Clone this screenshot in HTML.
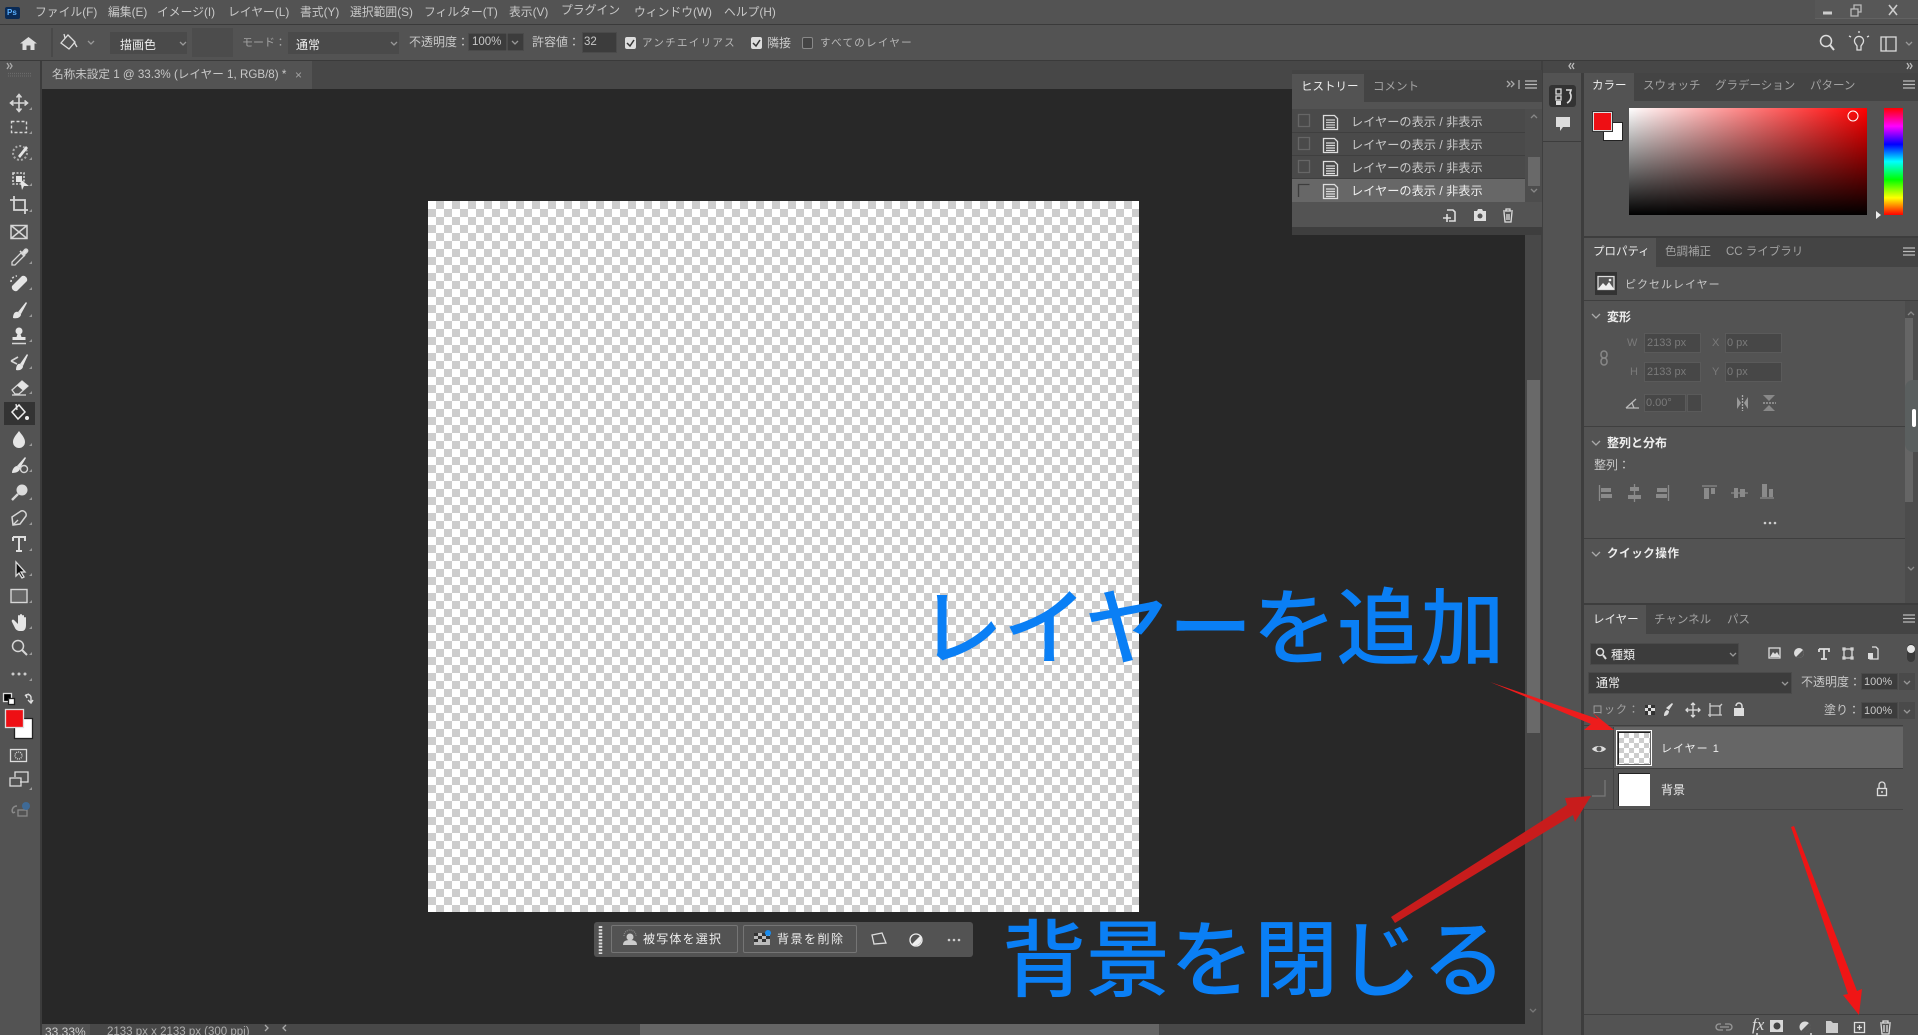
<!DOCTYPE html>
<html lang="ja"><head><meta charset="utf-8"><title>Photoshop</title>
<style>
html,body{margin:0;padding:0;background:#535353;width:1918px;height:1035px;overflow:hidden}
body{position:relative;font-family:"Liberation Sans","Noto Sans CJK JP",sans-serif}
.b{position:absolute}
.t{position:absolute;white-space:nowrap;line-height:16px;font-size:12px;color:#c8c8c8}
.d{color:#a2a2a2}.w{color:#eee}.m{color:#7a7a7a}.bold{font-weight:700;color:#eee}
.f{position:absolute;background:#3c3c3c;border:1px solid #4a4a4a;box-sizing:border-box}
.dis{position:absolute;background:#474747;border:1px solid #5a5a5a;box-sizing:border-box}
.ann{position:absolute;white-space:nowrap;color:#0a7ff5;font-size:84px;line-height:90px;font-family:"Noto Sans CJK JP",sans-serif;font-weight:500}
</style></head><body>
<!-- chrome -->
<div class="b" style="left:0;top:24px;width:1918px;height:1px;background:#3a3a3a"></div>
<div class="b" style="left:0;top:60px;width:1918px;height:1px;background:#3a3a3a"></div>
<div class="b" style="left:1815px;top:0;width:103px;height:18px;background:#575757;border-bottom:1px solid #626262"></div>
<!-- tab bar -->
<div class="b" style="left:0;top:61px;width:1541px;height:12px;background:#474747"></div>
<div class="b" style="left:42px;top:61px;width:1499px;height:28px;background:#474747"></div>
<div class="b" style="left:42px;top:61px;width:270px;height:28px;background:#535353"></div>
<!-- workspace -->
<div class="b" style="left:42px;top:89px;width:1483px;height:935px;background:#282828"></div>
<div class="b" style="left:0;top:61px;width:40px;height:974px;background:#535353"></div>
<div class="b" style="left:40px;top:61px;width:2px;height:974px;background:#3c3c3c"></div>
<div class="b" style="left:4px;top:402px;width:31px;height:23px;background:#333"></div>
<!-- canvas -->
<div class="b" style="left:428px;top:201px;width:711px;height:711px;background:conic-gradient(#cdcdcd 25%,#fff 0 50%,#cdcdcd 0 75%,#fff 0) 0 0/16px 16px"></div>
<!-- scrollbars -->
<div class="b" style="left:1525px;top:89px;width:16px;height:946px;background:#484848"></div>
<div class="b" style="left:1527px;top:380px;width:13px;height:353px;background:#696969"></div>
<div class="b" style="left:42px;top:1024px;width:1499px;height:11px;background:#484848"></div>
<div class="b" style="left:42px;top:1024px;width:48px;height:11px;background:#535353"></div>
<div class="b" style="left:640px;top:1024px;width:519px;height:11px;background:#656565"></div>
<div class="t" style="left:45px;top:1024px;font-size:12px;color:#ccc">33.33%</div>
<div class="t" style="left:107px;top:1024px;font-size:11.5px;color:#b0b0b0">2133 px x 2133 px (300 ppi)</div>
<!-- contextual bar -->
<div class="b" style="left:594px;top:922px;width:379px;height:35px;background:#535353;border-radius:3px"></div>
<div class="b" style="left:611px;top:925px;width:127px;height:28px;box-sizing:border-box;border:1px solid #757575;border-radius:2px"></div>
<div class="b" style="left:743px;top:925px;width:114px;height:28px;box-sizing:border-box;border:1px solid #757575;border-radius:2px"></div>
<div class="t w" style="left:643px;top:931px;letter-spacing:1.2px">被写体を選択</div>
<div class="t w" style="left:777px;top:931px;letter-spacing:1.5px">背景を削除</div>
<!-- dock -->
<div class="b" style="left:1541px;top:61px;width:2px;height:974px;background:#3f3f3f"></div>
<div class="b" style="left:1543px;top:61px;width:375px;height:12px;background:#474747"></div>
<div class="b" style="left:1581px;top:73px;width:3px;height:962px;background:#3d3d3d"></div>
<div class="b" style="left:1543px;top:141px;width:38px;height:1px;background:#3d3d3d"></div>
<div class="b" style="left:1549px;top:85px;width:27px;height:22px;background:#333;border-radius:3px"></div>
<!-- colour panel -->
<div class="b" style="left:1584px;top:73px;width:334px;height:28px;background:#444"></div>
<div class="b" style="left:1584px;top:73px;width:50px;height:29px;background:#535353"></div>
<div class="t w" style="left:1592px;top:78px;font-size:11.5px">カラー</div>
<div class="t d" style="left:1643px;top:78px;font-size:11.5px">スウォッチ</div>
<div class="t d" style="left:1715px;top:78px;font-size:11.5px">グラデーション</div>
<div class="t d" style="left:1810px;top:78px;font-size:11.5px">パターン</div>
<div class="b" style="left:1603px;top:122px;width:20px;height:19px;background:#fff;border:1px solid #222;box-sizing:border-box"></div>
<div class="b" style="left:1593px;top:112px;width:19px;height:19px;background:#ee0f14;border:1px solid #ddd;box-sizing:border-box;outline:1px solid #333"></div>
<div class="b" style="left:1629px;top:108px;width:238px;height:107px;background:linear-gradient(to bottom,rgba(0,0,0,0),#000),linear-gradient(to right,#fff,#f00)"></div>
<div class="b" style="left:1884px;top:108px;width:19px;height:107px;background:linear-gradient(to bottom,#f00,#f0f 17%,#00f 34%,#0ff 50%,#0f0 67%,#ff0 84%,#f00)"></div>
<div class="b" style="left:1584px;top:236px;width:334px;height:2px;background:#3d3d3d"></div>
<!-- properties -->
<div class="b" style="left:1584px;top:238px;width:334px;height:29px;background:#444"></div>
<div class="b" style="left:1584px;top:238px;width:72px;height:30px;background:#535353"></div>
<div class="t w" style="left:1593px;top:244px;font-size:11.5px">プロパティ</div>
<div class="t d" style="left:1665px;top:244px;font-size:11.5px">色調補正</div>
<div class="t d" style="left:1726px;top:244px;font-size:11.5px">CC ライブラリ</div>
<div class="b" style="left:1595px;top:272px;width:22px;height:23px;background:#333"></div>
<div class="t" style="left:1625px;top:277px;font-size:11px;letter-spacing:1px">ピクセルレイヤー</div>
<div class="b" style="left:1584px;top:300px;width:334px;height:1px;background:#3f3f3f"></div>
<div class="t bold" style="left:1607px;top:309px">変形</div>
<div class="t m" style="left:1627px;top:335px;font-size:11px">W</div>
<div class="t m" style="left:1630px;top:364px;font-size:11px">H</div>
<div class="t m" style="left:1712px;top:335px;font-size:11px">X</div>
<div class="t m" style="left:1712px;top:364px;font-size:11px">Y</div>
<div class="dis" style="left:1644px;top:333px;width:57px;height:20px"></div>
<div class="dis" style="left:1725px;top:333px;width:57px;height:20px"></div>
<div class="dis" style="left:1644px;top:362px;width:57px;height:20px"></div>
<div class="dis" style="left:1725px;top:362px;width:57px;height:20px"></div>
<div class="dis" style="left:1644px;top:394px;width:42px;height:18px"></div>
<div class="dis" style="left:1687px;top:394px;width:15px;height:18px"></div>
<div class="t m" style="left:1647px;top:335px;font-size:11px">2133 px</div>
<div class="t m" style="left:1727px;top:335px;font-size:11px">0 px</div>
<div class="t m" style="left:1647px;top:364px;font-size:11px">2133 px</div>
<div class="t m" style="left:1727px;top:364px;font-size:11px">0 px</div>
<div class="t m" style="left:1646px;top:395px;font-size:11px">0.00°</div>
<div class="b" style="left:1584px;top:426px;width:321px;height:1px;background:#3f3f3f"></div>
<div class="t bold" style="left:1607px;top:435px">整列と分布</div>
<div class="t" style="left:1594px;top:457px">整列：</div>
<div class="b" style="left:1584px;top:538px;width:321px;height:1px;background:#3f3f3f"></div>
<div class="t bold" style="left:1607px;top:546px;font-size:11.5px;letter-spacing:.6px">クイック操作</div>
<div class="b" style="left:1905px;top:301px;width:13px;height:302px;background:#4c4c4c"></div>
<div class="b" style="left:1905px;top:318px;width:8px;height:184px;background:#656565"></div>
<div class="b" style="left:1905px;top:380px;width:13px;height:72px;background:#5a5f5f;border-radius:8px 0 0 8px"></div>
<div class="b" style="left:1912px;top:409px;width:4px;height:18px;background:#fff;border-radius:2px"></div>
<!-- layers -->
<div class="b" style="left:1584px;top:603px;width:334px;height:2px;background:#3d3d3d"></div>
<div class="b" style="left:1584px;top:605px;width:334px;height:29px;background:#444"></div>
<div class="b" style="left:1584px;top:605px;width:62px;height:30px;background:#535353"></div>
<div class="t w" style="left:1593px;top:612px;font-size:11.5px">レイヤー</div>
<div class="t d" style="left:1654px;top:612px;font-size:11.5px">チャンネル</div>
<div class="t d" style="left:1727px;top:612px;font-size:11.5px">パス</div>
<div class="f" style="left:1590px;top:643px;width:149px;height:22px"></div>
<div class="t w" style="left:1611px;top:647px">種類</div>
<div class="f" style="left:1588px;top:672px;width:204px;height:22px"></div>
<div class="t w" style="left:1596px;top:675px">通常</div>
<div class="t" style="left:1801px;top:674px;font-size:12px">不透明度：</div>
<div class="f" style="left:1861px;top:673px;width:37px;height:17px"></div>
<div class="b" style="left:1899px;top:673px;width:16px;height:17px;background:#4a4a4a"></div>
<div class="t" style="left:1864px;top:674px;font-size:11px">100%</div>
<div class="t d" style="left:1592px;top:702px;font-size:11px;letter-spacing:1px">ロック：</div>
<div class="t" style="left:1824px;top:702px;font-size:12px">塗り：</div>
<div class="f" style="left:1861px;top:702px;width:37px;height:17px"></div>
<div class="b" style="left:1899px;top:702px;width:16px;height:17px;background:#4a4a4a"></div>
<div class="t" style="left:1864px;top:703px;font-size:11px">100%</div>
<div class="b" style="left:1584px;top:725px;width:319px;height:1px;background:#3f3f3f"></div>
<div class="b" style="left:1584px;top:727px;width:319px;height:41px;background:#535353"></div>
<div class="b" style="left:1614px;top:727px;width:289px;height:41px;background:#666"></div>
<div class="b" style="left:1584px;top:768px;width:319px;height:1px;background:#3f3f3f"></div>
<div class="b" style="left:1584px;top:809px;width:319px;height:1px;background:#444"></div>
<div class="b" style="left:1613px;top:727px;width:1px;height:82px;background:#444"></div>
<div class="b" style="left:1616px;top:730px;width:36px;height:36px;box-sizing:border-box;border:1px solid #fff;padding:1px"><div style="width:100%;height:100%;border-top:1px solid #222;border-left:1px solid #222;box-sizing:border-box;background:conic-gradient(#cdcdcd 25%,#fff 0 50%,#cdcdcd 0 75%,#fff 0) 0 0/10px 10px"></div></div>
<div class="b" style="left:1618px;top:773px;width:32px;height:33px;background:#fff;border-top:1px solid #222;border-left:1px solid #222;box-sizing:border-box"></div>
<div class="t" style="left:1661px;top:741px;font-size:11px;letter-spacing:1px;color:#eee">レイヤー 1</div>
<div class="t w" style="left:1661px;top:782px">背景</div>
<div class="b" style="left:1584px;top:1014px;width:334px;height:1px;background:#3f3f3f"></div>
<!-- history panel -->
<div class="b" style="left:1292px;top:70px;width:250px;height:165px;background:#535353"></div>
<div class="b" style="left:1292px;top:70px;width:250px;height:32px;background:#444"></div>
<div class="b" style="left:1292px;top:74px;width:72px;height:29px;background:#535353"></div>
<div class="t w" style="left:1301px;top:79px;font-size:11.5px">ヒストリー</div>
<div class="t d" style="left:1373px;top:79px;font-size:11.5px">コメント</div>
<div class="b" style="left:1292px;top:109px;width:233px;height:93px;background:#4a4a4a"></div>
<div class="b" style="left:1292px;top:132px;width:233px;height:1px;background:#3f3f3f"></div>
<div class="b" style="left:1292px;top:155px;width:233px;height:1px;background:#3f3f3f"></div>
<div class="b" style="left:1292px;top:178px;width:233px;height:1px;background:#3f3f3f"></div>
<div class="b" style="left:1292px;top:179px;width:233px;height:23px;background:#676767"></div>
<div class="b" style="left:1525px;top:109px;width:17px;height:93px;background:#4d4d4d"></div>
<div class="b" style="left:1528px;top:157px;width:12px;height:29px;background:#696969"></div>
<div class="t" style="left:1351px;top:114px;font-size:12.2px">レイヤーの表示 / 非表示</div>
<div class="t" style="left:1351px;top:137px;font-size:12.2px">レイヤーの表示 / 非表示</div>
<div class="t" style="left:1351px;top:160px;font-size:12.2px">レイヤーの表示 / 非表示</div>
<div class="t w" style="left:1351px;top:183px;font-size:12.2px">レイヤーの表示 / 非表示</div>
<div class="b" style="left:1292px;top:227px;width:250px;height:8px;background:#3e3e3e"></div>
<!-- menu -->
<div class="t" style="left:35px;top:4px;font-size:11.8px">ファイル(F)</div>
<div class="t" style="left:108px;top:4px;font-size:11.8px">編集(E)</div>
<div class="t" style="left:157px;top:4px;font-size:11.8px">イメージ(I)</div>
<div class="t" style="left:228px;top:4px;font-size:11.8px">レイヤー(L)</div>
<div class="t" style="left:300px;top:4px;font-size:11.8px">書式(Y)</div>
<div class="t" style="left:350px;top:4px;font-size:11.8px">選択範囲(S)</div>
<div class="t" style="left:424px;top:4px;font-size:11.8px">フィルター(T)</div>
<div class="t" style="left:509px;top:4px;font-size:11.8px">表示(V)</div>
<div class="t" style="left:561px;top:2px;font-size:11.8px">プラグイン</div>
<div class="t" style="left:634px;top:4px;font-size:11.8px">ウィンドウ(W)</div>
<div class="t" style="left:724px;top:4px;font-size:11.8px">ヘルプ(H)</div>
<div class="b" style="left:5px;top:7px;width:15px;height:12px;background:#0a2a55;border-radius:2px"></div>
<div class="t" style="left:7px;top:5px;font-size:8px;color:#5ab0ff;font-weight:700">Ps</div>
<!-- options -->
<div class="f" style="left:110px;top:32px;width:77px;height:22px;background:#4a4a4a"></div>
<div class="b" style="left:192px;top:28px;width:41px;height:29px;background:#4c4c4c"></div>
<div class="f" style="left:288px;top:32px;width:111px;height:22px;background:#4a4a4a"></div>
<div class="f" style="left:468px;top:33px;width:56px;height:18px"></div>
<div class="f" style="left:582px;top:32px;width:35px;height:21px"></div>
<div class="t w" style="left:120px;top:37px">描画色</div>
<div class="t d" style="left:242px;top:35px;font-size:11px">モード：</div>
<div class="t w" style="left:296px;top:37px">通常</div>
<div class="t" style="left:409px;top:34px">不透明度：</div>
<div class="t" style="left:472px;top:34px;font-size:11.5px">100%</div>
<div class="t" style="left:532px;top:34px">許容値：</div>
<div class="t" style="left:584px;top:34px;font-size:11.5px">32</div>
<div class="b" style="left:625px;top:37px;width:11px;height:12px;background:#ddd;border-radius:2px"></div>
<div class="t" style="left:642px;top:35px;font-size:10.5px;letter-spacing:1.3px;color:#b8b8b8">アンチエイリアス</div>
<div class="b" style="left:751px;top:37px;width:11px;height:12px;background:#ddd;border-radius:2px"></div>
<div class="t" style="left:767px;top:35px">隣接</div>
<div class="b" style="left:802px;top:37px;width:11px;height:12px;border:1px solid #888;box-sizing:border-box;border-radius:2px;background:#444"></div>
<div class="t" style="left:820px;top:35px;font-size:10.5px;letter-spacing:1.3px;color:#b8b8b8">すべてのレイヤー</div>
<div class="t" style="left:52px;top:67px;font-size:11.6px">名称未設定 1 @ 33.3% (レイヤー 1, RGB/8) *</div>
<div class="t d" style="left:295px;top:67px">×</div>

<svg class="b" style="left:0;top:0" width="1918" height="1035" viewBox="0 0 1918 1035" fill="none" stroke="#cfcfcf" stroke-width="1.3">
<!-- option bar icons -->
<path d="M20 43.5L28.5 37L37 43.5H34.5V50H30.5V45.5H26.5V50H22.5V43.5Z" fill="#ddd" stroke="none"/>
<path d="M52 28V57" stroke="#444"/>
<path d="M61 43l7-8 7 7-6 7zM65 38l-1-4" stroke="#ddd"/><path d="M74 42l3 5" stroke="#ddd"/>
<path d="M88 41l3 3 3-3M180 42l3 3 3-3M391 42l3 3 3-3M512 41l3 3 3-3M1906 42l3 3 3-3" stroke="#999"/>
<path d="M507 33V51" stroke="#555"/>
<path d="M627 43l3 3 4-6M753 43l3 3 4-6" stroke="#333" stroke-width="1.5"/>
<!-- window controls -->
<path d="M1823 13h9" stroke="#ccc" stroke-width="3"/>
<path d="M1851 9h7v7h-7zM1854 9V5h7v7h-3" stroke="#bbb"/>
<path d="M1889 5l8 10M1897 5l-8 10" stroke="#ccc" stroke-width="1.6"/>
<!-- top right -->
<circle cx="1826" cy="41" r="5.5" stroke="#ddd" stroke-width="1.5"/><path d="M1830 45l4 5" stroke="#ddd" stroke-width="2"/>
<path d="M1855 43a4.5 4.5 0 1 1 8 0l-2 3v4h-4v-4z" stroke="#ddd"/><path d="M1851 37l-2-1M1867 37l2-1M1859 33v-2" stroke="#ddd"/>
<path d="M1881 37h15v14h-15zM1886 37v14" stroke="#ddd"/>
<!-- collapse chevrons -->
<path d="M7 63l2 3-2 3M10 63l2 3-2 3" stroke="#aaa"/>
<path d="M1574 63l-2 3 2 3M1571 63l-2 3 2 3" stroke="#bbb"/>
<path d="M1907 63l2 3-2 3M1910 63l2 3-2 3" stroke="#bbb"/>
<path d="M8 73.5h24M8 76h24" stroke="#6a6a6a" stroke-dasharray="1 1"/>
<!-- tools -->
<g stroke="#d6d6d6" stroke-width="1.3">
<g transform="translate(19,103)"><path d="M0-8V8M-8 0H8M-2.5-5.5L0-8.5L2.5-5.5M-2.5 5.5L0 8.5L2.5 5.5M-5.5-2.5L-8.5 0L-5.5 2.5M5.5-2.5L8.5 0L5.5 2.5" stroke-width="1.6"/></g>
<g transform="translate(19,127)"><rect x="-7.5" y="-5.5" width="15" height="11" stroke-dasharray="3 2" stroke-width="1.4"/></g>
<g transform="translate(20,153)"><circle cx="0" cy="0" r="7" stroke-dasharray="2 2" stroke-width="2" stroke="#aaa"/><path d="M-2 3L6-7L8-5L0 5Z" fill="#e5e5e5" stroke="none"/></g>
<g transform="translate(19,179)"><rect x="-6" y="-6" width="11" height="11" stroke-dasharray="2 1.5" stroke-width="1.6"/><path d="M-3-3h6v6h-6zM1 0L10 7L5 7L3 11Z" fill="#e5e5e5" stroke="none"/></g>
<g transform="translate(19,205)"><path d="M-9-5H6V9M-5-9V5H9" stroke-width="1.8"/></g>
<g transform="translate(19,232)"><path d="M-8-6.5H8V6.5H-8ZM-8-6.5L8 6.5M8-6.5L-8 6.5" stroke-width="1.5"/></g>
<g transform="translate(19,257)"><path d="M-7 8L-7 5L2-4L5-1L-4 8Z" /><path d="M1-6L6-1M3-4L6-7.5A1.5 1.5 0 0 1 8-5L5-2Z" fill="#e5e5e5" stroke-width="1.6"/></g>
<g transform="translate(19,283)"><path d="M-7 3L3-7A4 4 0 0 1 8-2L-2 8A4 4 0 0 1-7 3Z" fill="#e5e5e5" stroke="none"/><path d="M-8-1a6 6 0 0 1 6-6" stroke-dasharray="2 2" stroke-width="1.6"/></g>
<g transform="translate(19,310)"><path d="M-1 2L7-8L8-7L2 4Z" fill="#e5e5e5" stroke="none"/><path d="M-6 8C-6 4-4 1-1 2L2 4C2 7-1 9-6 8Z" fill="#e5e5e5" stroke="none"/></g>
<g transform="translate(19,336)"><circle cx="0" cy="-5" r="3.5" fill="#e5e5e5" stroke="none"/><path d="M-1.5-2h3l1 3h4v3h-13v-3h4z" fill="#e5e5e5" stroke="none"/><path d="M-7 7.5H7" stroke-width="1.5"/></g>
<g transform="translate(20,362)"><path d="M0 2L7-8L8-7L3 4Z" fill="#e5e5e5" stroke="none"/><path d="M-4 8C-4 4-2 1 0 2L3 4C3 7 0 9-4 8Z" fill="#e5e5e5" stroke="none"/><path d="M-9-1L-2-5M-9-1L-3 2" stroke-width="1.6"/></g>
<g transform="translate(20,387)"><path d="M-8 3L2-6L8-1L-1 7H-5Z" /><path d="M-3-1.500L2-6L8-1L3 3.500Z" fill="#e5e5e5" stroke="none"/><path d="M-8 8H6"/></g>
<g transform="translate(19,413)"><path d="M-7-1L0-8L6-1L-1 6Z" stroke="#eee" stroke-width="1.5"/><path d="M-2-3L-3-9" stroke="#eee"/><circle cx="8" cy="5" r="2" fill="#eee" stroke="none"/></g>
<g transform="translate(19,439)"><path d="M0-8C3-4 6-1 6 3A6 6 0 0 1-6 3C-6-1-3-4 0-8Z" fill="#e5e5e5" stroke="none"/></g>
<g transform="translate(19,465)"><path d="M-2 1L6-8L7-7L1 3Z" fill="#e5e5e5" stroke="none"/><path d="M-7 8C-7 4-4 1-2 1L1 3C1 6-2 8-7 8Z" fill="#e5e5e5" stroke="none"/><circle cx="5" cy="4" r="3.500" stroke-width="1.4"/></g>
<g transform="translate(19,493)"><circle cx="3" cy="-3" r="5.500" fill="#dcdcdc" stroke="none"/><path d="M-1 1L-7 7" stroke-width="2.400"/></g>
<g transform="translate(19,518)"><path d="M-6 7L-7-1L2-7A4 4 0 0 1 7-2L1 6Z" stroke-width="1.500"/><path d="M-6 7L-1 2" /></g>
<g transform="translate(19,570)"><path d="M-3-8V6L0 3L3 8L5 7L2 2L6 2Z" fill="#111" stroke="#ddd"/></g>
<g transform="translate(19,596)"><rect x="-8" y="-6.500" width="16" height="13" fill="#666" stroke-width="1.400"/></g>
<g transform="translate(19,622)"><path d="M-7 0L-4 6C-3 8-1 9 1 9H3C6 9 7 6 7 3V-4A1 1 0 0 0 5-4V0V-6A1 1 0 0 0 3-6V-1V-7A1 1 0 0 0 1-7V-1V-6A1 1 0 0 0-1-6V2L-5-2C-6-3-8-2-7 0Z" fill="#e5e5e5" stroke="none"/></g>
<g transform="translate(19,648)"><circle cx="-1" cy="-2" r="5.500" stroke-width="1.500"/><path d="M3 2L8 7" stroke-width="2"/></g>
<g transform="translate(19,674)" fill="#ccc" stroke="none"><circle cx="-6" cy="0" r="1.500"/><circle cx="0" cy="0" r="1.500"/><circle cx="6" cy="0" r="1.500"/></g>
<path d="M25 696c2-2 5-2 6 1v5M28 700l3 3 2-3M29 694l-3 1 1 3" stroke="#ddd" stroke-width="1.400"/>
<rect x="10.500" y="749.500" width="16" height="12" stroke="#ddd"/><circle cx="18.500" cy="755.500" r="3.500" stroke-dasharray="1 1" stroke="#ddd"/>
<path d="M15 777v-5h13v10h-8M10 778h11v8H10z" stroke="#ddd" stroke-width="1.300"/>
<path d="M13 813c-2-3 0-7 4-7M13 813l-1-2M13 813l2-1" stroke="#8a8a8a" stroke-width="1.500"/><rect x="18" y="810" width="9" height="6" stroke="#8a8a8a"/>
</g>
<circle cx="26" cy="806" r="4" fill="#3f6a96" stroke="none"/>
<g fill="#999" stroke="none"><path d="M29 110h3v-3zM29 134h3v-3zM29 160h3v-3zM29 186h3v-3zM29 212h3v-3zM29 264h3v-3zM29 290h3v-3zM29 317h3v-3zM29 342h3v-3zM29 369h3v-3zM29 394h3v-3zM29 446h3v-3zM29 472h3v-3zM29 500h3v-3zM29 525h3v-3zM29 551h3v-3zM29 576h3v-3zM29 603h3v-3zM29 629h3v-3zM29 655h3v-3zM29 681h3v-3zM29 790h3v-3z"/></g>
<!-- small default swatch -->
<rect x="3.500" y="693.500" width="8" height="8" fill="#000" stroke="#ddd"/><rect x="8.500" y="698.500" width="6" height="6" fill="#fff" stroke="#222"/>
<rect x="14.500" y="718.500" width="18" height="20" fill="#fff" stroke="#222"/><rect x="5.500" y="709.500" width="18" height="18" fill="#ee0f14" stroke="#ddd"/>
<!-- T -->
<path d="M13 537H25V541M13 537V541M19 537V551M16 551H22" stroke="#ddd" stroke-width="2"/>
<!-- contextual icons -->
<path d="M598.500 926V954" stroke="#ddd" stroke-width="3.500" stroke-dasharray="2 1.300" transform="translate(2,0)"/>
<circle cx="630" cy="937" r="3.500" fill="#ccc" stroke="none"/><path d="M623 945c0-4 3-5 7-5s7 1 7 5z" fill="#ccc" stroke="none"/><path d="M624 936a6 6 0 0 1 12 0" stroke="#888" stroke-dasharray="1 1"/>
<rect x="754" y="933" width="16" height="12" fill="#bbb" stroke="none"/><path d="M754 933h4v3h-4zM762 933h4v3h-4zM758 936h4v3h-4zM766 936h4v3h-4zM754 939h4v3h-4zM762 939h4v3h-4z" fill="#333" stroke="none"/><circle cx="768" cy="933" r="3" fill="#1b8ef0" stroke="none"/>
<path d="M872 935l10-2 4 10-12 1zM872 935l2 9" stroke="#ddd"/>
<circle cx="916" cy="940" r="6" stroke="#eee" stroke-width="1.300"/><path d="M920.200 935.800a6 6 0 0 1-8.400 8.400z" fill="#eee" stroke="none"/>
<g fill="#ccc" stroke="none"><circle cx="949" cy="940" r="1.300"/><circle cx="954" cy="940" r="1.300"/><circle cx="959" cy="940" r="1.300"/></g>
<!-- dock icons -->
<path d="M1556 89h5v5h-5zM1556 96h5v4h-5z" stroke="#ddd"/><rect x="1556" y="101" width="5" height="4" fill="#ddd" stroke="none"/><path d="M1566 90h5l-1 3c2 3 1 8-3 10" stroke="#ddd" stroke-width="1.600"/>
<path d="M1556 117h14v10h-7l-3 4v-4h-4z" fill="#ddd" stroke="none"/>
<!-- history -->
<path d="M1507 81l3 3-3 3M1511 81l3 3-3 3M1519 80v9" stroke="#aaa"/>
<path d="M1525 81h12M1525 84.500h12M1525 88h12" stroke="#bbb"/>
<g stroke="#666"><path d="M1298.500 114.500h11v12h-11zM1298.500 137.500h11v12h-11zM1298.500 160.500h11v12h-11z"/><path d="M1298.500 197v-12.500h11" stroke="#3d3d3d"/></g>
<g stroke="#ddd"><path d="M1323.500 115.500h11l3 3v11h-14z"/><path d="M1326 120h9M1326 122.500h9M1326 125h9M1326 127.500h9" stroke="#ccc"/>
<path d="M1323.500 138.500h11l3 3v11h-14zM1326 143h9M1326 145.500h9M1326 148h9M1326 150.500h9M1323.500 161.500h11l3 3v11h-14zM1326 166h9M1326 168.500h9M1326 171h9M1326 173.500h9M1323.500 184.500h11l3 3v11h-14zM1326 189h9M1326 191.500h9M1326 194h9M1326 196.500h9"/></g>
<path d="M1531 118l3-3 3 3" stroke="#888"/><path d="M1531 189l3 3 3-3" stroke="#888"/>
<path d="M1447 210h6l2 2v9h-6M1443 218h8M1447 214v8" stroke="#ddd" stroke-width="1.600"/>
<path d="M1474 211h3l1-2h4l1 2h3v10h-12z" fill="#ddd" stroke="none"/><circle cx="1480" cy="216" r="2.500" fill="#535353" stroke="none"/>
<path d="M1503 211h10M1506 211v-2h4v2M1504 212l1 10h6l1-10M1507 214v6M1509 214v6" stroke="#ddd"/>
<!-- colour -->
<circle cx="1853" cy="116" r="5" stroke="#fff" stroke-width="1"/>
<path d="M1876 211v8l5-4z" fill="#eee" stroke="none"/>
<path d="M1903 81h12M1903 84.500h12M1903 88h12M1903 248h12M1903 251.500h12M1903 255h12M1903 615h12M1903 618.500h12M1903 622h12" stroke="#bbb"/>
<!-- properties -->
<path d="M1598 276.500h16v13h-16z" stroke="#ddd" fill="#555"/><path d="M1598 289l5-6 3 3 3-4 5 7z" fill="#eee" stroke="none"/><circle cx="1610" cy="280" r="1.300" fill="#eee" stroke="none"/>
<path d="M1592 314l4 4 4-4M1592 441l4 4 4-4M1592 552l4 4 4-4" stroke="#aaa"/>
<rect x="1601" y="351" width="6" height="7" rx="3" stroke="#888" stroke-width="1.500"/><rect x="1601" y="358" width="6" height="7" rx="3" stroke="#888" stroke-width="1.500"/>
<path d="M1626 408h13M1626 408l10-9M1632 403l2 5" stroke="#bbb"/>
<path d="M1737 397l4 6-4 6zM1748 397l-4 6 4 6z" fill="#999" stroke="none"/><path d="M1742.500 395v16" stroke="#aaa" stroke-dasharray="2 1"/>
<path d="M1763 395h12l-6 6zM1763 411h12l-6-6z" fill="#888" stroke="none"/><path d="M1763 403h13" stroke="#aaa" stroke-dasharray="2 1"/>
<g stroke="#8a8a8a"><path d="M1599.500 485v16"/><path d="M1601 488h10v4h-10zM1601 494h11v4h-11z" fill="#8a8a8a" stroke="none"/>
<path d="M1634.500 484v18"/><path d="M1630 487h9v4h-9zM1628 495h13v4h-13z" fill="#8a8a8a" stroke="none"/>
<path d="M1668.500 485v16"/><path d="M1657 488h10v4h-10zM1656 494h11v4h-11z" fill="#8a8a8a" stroke="none"/>
<path d="M1702 486h15"/><path d="M1704 488h5v11h-5zM1711 488h4v6h-4z" fill="#8a8a8a" stroke="none"/>
<path d="M1731 493h17"/><path d="M1734 488h4v10h-4zM1740 489h5v8h-5z" fill="#8a8a8a" stroke="none"/>
<path d="M1760 498h14"/><path d="M1762 484h5v13h-5zM1769 489h4v8h-4z" fill="#8a8a8a" stroke="none"/></g>
<g fill="#ccc" stroke="none"><circle cx="1765" cy="523" r="1.300"/><circle cx="1770" cy="523" r="1.300"/><circle cx="1775" cy="523" r="1.300"/></g>
<path d="M1908 315l3-3 3 3M1908 567l3 3 3-3" stroke="#888"/>
<!-- layers -->
<circle cx="1600" cy="652" r="3.500" stroke="#ddd" stroke-width="1.500"/><path d="M1603 655l3 4" stroke="#ddd" stroke-width="2"/>
<path d="M1730 653l3 3 3-3M1782 682l3 3 3-3M1904 681l3 3 3-3M1904 710l3 3 3-3" stroke="#999"/>
<path d="M1769 648h11v10h-11z" stroke="#ddd"/><path d="M1770 657l3-5 2 2 2-2 3 5z" fill="#ddd" stroke="none"/>
<circle cx="1799" cy="653" r="5" fill="#ddd" stroke="none"/><path d="M1803 650a5 5 0 0 1-7 7z" fill="#555" stroke="none"/>
<path d="M1819 649h10v3M1819 649v3M1824 649v10M1821 659h6" stroke="#ddd" stroke-width="1.800"/>
<path d="M1844 649h8v9h-8z" stroke="#ddd"/><rect x="1843" y="648" width="2" height="2" fill="#ddd"/><rect x="1851" y="648" width="2" height="2" fill="#ddd"/><rect x="1843" y="657" width="2" height="2" fill="#ddd"/><rect x="1851" y="657" width="2" height="2" fill="#ddd"/>
<path d="M1872 647h4l2 2v10h-8v-5" stroke="#ddd"/><rect x="1868" y="653" width="5" height="6" fill="#ddd" stroke="none"/>
<rect x="1907" y="644" width="8" height="18" rx="4" fill="#3a3a3a" stroke="none"/><circle cx="1911" cy="649" r="4" fill="#e5e5e5" stroke="none"/>
<!-- lock row -->
<path d="M1645 705h10v10h-10z" fill="#ddd" stroke="none"/><path d="M1645 705h3v3h-3zM1651 705h4v3h-4zM1648 708h3v3h-3zM1645 711h3v4h-3zM1651 711h4v4h-4z" fill="#333" stroke="none"/>
<path d="M1666 708l6-5 1 1-4 6zM1664 716c0-3 1-5 3-6l2 1c0 3-2 5-5 5z" fill="#ddd" stroke="none"/>
<path d="M1693 703v14M1686 710h14M1691 705l2-2 2 2M1691 715l2 2 2-2M1688 708l-2 2 2 2M1698 708l2 2-2 2" stroke="#ddd"/>
<path d="M1710 706h10v9h-10zM1722 704l-3 3M1710 703v14M1708 715h14" stroke="#ccc"/>
<path d="M1736 706a3 3 0 0 1 6 0v2" stroke="#ddd" stroke-width="1.500"/><rect x="1734" y="708" width="10" height="8" fill="#ddd" stroke="none"/>
<!-- layer rows -->
<path d="M1592 749c3-4 11-4 14 0c-3 4-11 4-14 0z" fill="#ddd" stroke="none"/><circle cx="1599" cy="749" r="2.500" fill="#555" stroke="none"/>
<path d="M1605 780v16h-13" stroke="#777"/>
<path d="M1879 788v-3a3 3 0 0 1 6 0v3" stroke="#ddd"/><rect x="1877.500" y="788.500" width="9" height="7" stroke="#ddd"/><circle cx="1882" cy="792" r="1" fill="#ddd" stroke="none"/>
<!-- layers bottom -->
<path d="M1721 1024h-2a3 3 0 0 0 0 6h4M1725 1024h4a3 3 0 0 1 0 6h-3M1720 1027h9" stroke="#999"/>
<path d="M1770 1020h13v12h-13z" fill="#d8d8d8" stroke="none"/><circle cx="1777" cy="1026" r="3.500" fill="#444" stroke="none"/>
<circle cx="1805" cy="1027" r="5.500" fill="#ddd" stroke="none"/><path d="M1809 1023a5.500 5.500 0 0 1-8 8z" fill="#555" stroke="none"/>
<path d="M1826 1021h5l2 2h5v10h-12z" fill="#ccc" stroke="none"/>
<path d="M1854.500 1022.500h10v10h-10zM1859.500 1025v5M1857 1027.500h5" stroke="#ddd"/>
<path d="M1880 1023h11M1883 1023v-2h5v2M1881 1024l1 10h7l1-10M1884 1025v7M1887 1025v7" stroke="#ddd"/>
<path d="M1757 1033v2M1811 1033v2" stroke="#eee"/>
<!-- scroll arrows -->
<path d="M1530 1009l3 3 3-3" stroke="#777"/>
<path d="M265 1025l3 3-3 3M286 1025l-3 3 3 3" stroke="#aaa"/>
<!-- arrows -->
<path d="M1490 682L1598 719L1593 713L1614 730L1584 730L1591 724Z" fill="#ee1c1c" stroke="none"/>
<path d="M1391 917L1567 805L1565 798L1591 796L1575 822L1573 815L1395 923Z" fill="#c81c1c" stroke="none"/>
<path d="M1791 827L1794 826L1857 991L1862 989L1859 1015L1843 995L1848 994Z" fill="#f01515" stroke="none"/>
</svg>
<div class="t" style="left:1752px;top:1017px;font-family:'Liberation Serif',serif;font-style:italic;font-size:17px;color:#ddd">fx</div>
<div class="ann" style="left:919px;top:578px">レイヤーを追加</div>
<div class="ann" style="left:1002px;top:910px">背景を閉じる</div>
</body></html>
